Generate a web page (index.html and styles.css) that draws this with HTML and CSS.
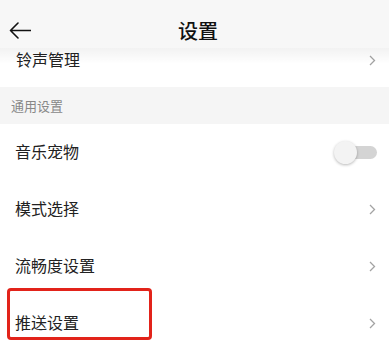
FILE: index.html
```html
<!DOCTYPE html>
<html lang="zh-CN">
<head>
<meta charset="utf-8">
<title>设置</title>
<link rel="stylesheet" href="styles.css">
</head>
<body>
<div class="screen">
  <header class="header">
    <span class="back">
      <svg width="22" height="17" viewBox="0 0 22 17"><path d="M21.5 8.5H1.5M9 1L1.5 8.5L9 16" fill="none" stroke="#111" stroke-width="1.6" stroke-linecap="round" stroke-linejoin="round"/></svg>
    </span>
    <h1 class="title">设置</h1>
  </header>
  <div class="list">
    <div class="row row-clipped">
      <span class="label">铃声管理</span>
      <svg class="chev" width="7" height="11" viewBox="0 0 7 11"><path d="M1 1L5.5 5.5L1 10" fill="none" stroke="#a3a3a3" stroke-width="1.3"/></svg>
    </div>
    <div class="section">通用设置</div>
    <div class="row">
      <span class="label">音乐宠物</span>
      <span class="toggle"><span class="track"></span><span class="knob"></span></span>
    </div>
    <div class="row">
      <span class="label">模式选择</span>
      <svg class="chev" width="7" height="11" viewBox="0 0 7 11"><path d="M1 1L5.5 5.5L1 10" fill="none" stroke="#a3a3a3" stroke-width="1.3"/></svg>
    </div>
    <div class="row">
      <span class="label">流畅度设置</span>
      <svg class="chev" width="7" height="11" viewBox="0 0 7 11"><path d="M1 1L5.5 5.5L1 10" fill="none" stroke="#a3a3a3" stroke-width="1.3"/></svg>
    </div>
    <div class="row">
      <span class="label">推送设置</span>
      <svg class="chev" width="7" height="11" viewBox="0 0 7 11"><path d="M1 1L5.5 5.5L1 10" fill="none" stroke="#a3a3a3" stroke-width="1.3"/></svg>
    </div>
  </div>
  <div class="highlight"></div>
</div>
</body>
</html>
```
FILE: styles.css
```css
* { box-sizing: border-box; }
html, body {
  margin: 0;
  padding: 0;
  background: #fff;
}
body {
  width: 389px;
  height: 349px;
  overflow: hidden;
  font-family: "Noto Sans CJK SC", "Noto Sans", sans-serif;
  color: #222;
}
.screen {
  position: relative;
  width: 389px;
  height: 349px;
  overflow: hidden;
}
.header {
  position: absolute;
  top: 0;
  left: 0;
  right: 0;
  height: 48px;
  background: #f7f7f7;
  display: flex;
  align-items: center;
  padding-top: 12px;
  z-index: 2;
}
.header::after {
  content: "";
  position: absolute;
  left: 0;
  right: 0;
  top: 48px;
  height: 16px;
  background: linear-gradient(rgba(0,0,0,0.05), rgba(0,0,0,0));
}
.back {
  display: flex;
  padding-left: 9px;
  width: 31px;
}
.title {
  flex: 1;
  margin: 0;
  text-align: center;
  font-size: 20px;
  font-weight: 500;
  line-height: 24px;
  padding-right: 24px;
  padding-top: 2px;
  color: #111;
}
.list {
  padding-top: 33px;
}
.row {
  height: 57px;
  display: flex;
  align-items: center;
  justify-content: space-between;
  padding: 0 13px 0 15px;
  background: #fff;
}
.row-clipped {
  height: 54px;
  padding-left: 16px;
}
.label {
  font-size: 16px;
  line-height: 20px;
  margin-bottom: 3px;
}
.chev {
  display: block;
}
.section {
  height: 37px;
  background: #f5f5f5;
  display: flex;
  align-items: center;
  padding-left: 11px;
  font-size: 13px;
  color: #888;
}
.toggle {
  position: relative;
  width: 43px;
  height: 23px;
  margin-right: -1px;
}
.track {
  position: absolute;
  left: 6px;
  right: 0;
  top: 5px;
  height: 13px;
  border-radius: 7px;
  background: #d4d4d4;
}
.knob {
  position: absolute;
  left: 0;
  top: 0;
  width: 23px;
  height: 23px;
  border-radius: 50%;
  background: #f3f3f3;
  box-shadow: 0 1px 3px rgba(0,0,0,0.28);
}
.highlight {
  position: absolute;
  left: 7px;
  top: 288px;
  width: 145px;
  height: 52px;
  border: 3px solid #e2231a;
  border-radius: 4px;
  z-index: 3;
}
```
